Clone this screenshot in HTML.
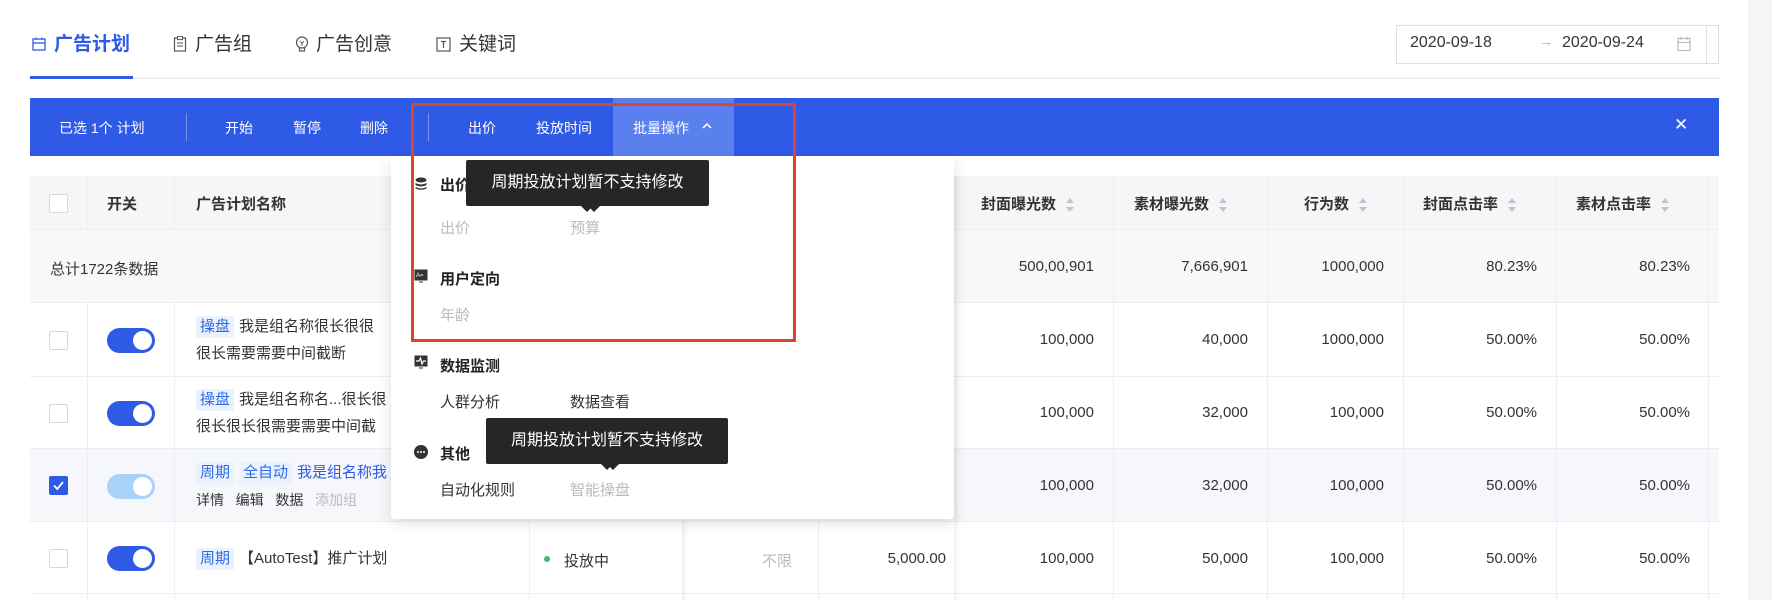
<!DOCTYPE html>
<html><head><meta charset="utf-8"><style>
*{margin:0;padding:0;box-sizing:border-box}
body{width:1772px;height:600px;overflow:hidden;background:#fff;font-family:"Liberation Sans","Noto Sans CJK SC",sans-serif;color:#333;position:relative;font-size:15px}
.a{position:absolute;white-space:nowrap}
.tab{font-size:19px;color:#333;top:32px;line-height:26px}
.hd{background:#f5f6f8}
.cell{position:absolute;top:0;bottom:0;border-right:1px solid #eceef2}
.r{text-align:right}
.num{position:absolute;font-size:15px;color:#333}
.cb{position:absolute;width:19px;height:19px;border:1px solid #d5d8de;background:#fff;border-radius:2px}
.tg{position:absolute;width:48px;height:25px;border-radius:13px;background:#2f5ae6}
.tg::after{content:"";position:absolute;right:3px;top:3px;width:19px;height:19px;border-radius:50%;background:#fff}
.tag{display:inline-block;background:#e9f2fe;color:#2f6ae6;padding:0 4px;border-radius:2px;margin-right:5px;line-height:22px}
.sort{display:inline-block;width:8px;height:14px;position:relative;margin-left:10px;vertical-align:middle}
.sort::before{content:"";position:absolute;left:0;top:0;border:4px solid transparent;border-bottom:5px solid #c0c4cc;border-top:0}
.sort::after{content:"";position:absolute;left:0;bottom:0;border:4px solid transparent;border-top:5px solid #c0c4cc;border-bottom:0}
.tip{position:absolute;background:#252627;color:#fff;font-size:16px;text-align:center;line-height:46px;border-radius:2px}
.tip::after{content:"";position:absolute;bottom:-6px;border:6px solid transparent;border-top:6px solid #252627;border-bottom:0}
.sh{font-weight:bold;font-size:15px;color:#222}
</style></head><body>
<div class="a" style="left:1748px;top:0;width:24px;height:600px;background:#f4f5f7"></div>

<!-- tabs -->
<svg class="a" style="left:32px;top:37px" width="14" height="14" viewBox="0 0 14 14"><rect x="1" y="2" width="12" height="11" fill="none" stroke="#2f5ae6" stroke-width="1.3"/><line x1="1" y1="6" x2="13" y2="6" stroke="#2f5ae6" stroke-width="1.3"/><line x1="4" y1="0.5" x2="4" y2="3" stroke="#2f5ae6"/><line x1="10" y1="0.5" x2="10" y2="3" stroke="#2f5ae6"/></svg>
<div class="a tab" style="left:54px;color:#2f5ae6;font-weight:bold">广告计划</div>
<svg class="a" style="left:173px;top:36px" width="14" height="16" viewBox="0 0 14 16"><rect x="1.5" y="2" width="11" height="13" fill="none" stroke="#555" stroke-width="1.2"/><rect x="4.5" y="0.6" width="5" height="3" fill="#fff" stroke="#555"/><line x1="4" y1="7" x2="10" y2="7" stroke="#555"/><line x1="4" y1="10" x2="10" y2="10" stroke="#555"/></svg>
<div class="a tab" style="left:195px">广告组</div>
<svg class="a" style="left:295px;top:36px" width="14" height="17" viewBox="0 0 14 17"><circle cx="7" cy="6.5" r="5.5" fill="none" stroke="#555" stroke-width="1.2"/><path d="M5 5 L7 7.5 L9 5 M7 7.5 V10" fill="none" stroke="#555"/><path d="M4.5 12 V15 H9.5 V12" fill="none" stroke="#555" stroke-width="1.2"/></svg>
<div class="a tab" style="left:316px">广告创意</div>
<svg class="a" style="left:436px;top:37px" width="15" height="15" viewBox="0 0 15 15"><rect x="1" y="1" width="13" height="13" fill="none" stroke="#555" stroke-width="1.2"/><path d="M5 4.5 H10 M7.5 4.5 V11" stroke="#555" stroke-width="1.2"/></svg>
<div class="a tab" style="left:459px">关键词</div>
<div class="a" style="left:30px;top:77px;width:1690px;height:2px;background:#eef0f3"></div>
<div class="a" style="left:30px;top:76px;width:103px;height:3px;background:#2f5ae6"></div>

<!-- date picker -->
<div class="a" style="left:1396px;top:25px;width:323px;height:39px;border:1px solid #dcdfe6;background:#fff"></div>
<div class="a" style="left:1706px;top:26px;width:1px;height:37px;background:#dcdfe6"></div>
<div class="a" style="left:1410px;top:34px;font-size:16px;color:#333">2020-09-18</div>
<div class="a" style="left:1539px;top:33px;font-size:14px;color:#aaa">→</div>
<div class="a" style="left:1562px;top:34px;font-size:16px;color:#333">2020-09-24</div>
<svg class="a" style="left:1677px;top:36px" width="14" height="16" viewBox="0 0 14 16"><rect x="1" y="2.5" width="12" height="12" fill="none" stroke="#bbb" stroke-width="1.2"/><line x1="1" y1="6.5" x2="13" y2="6.5" stroke="#bbb"/><line x1="4" y1="0.5" x2="4" y2="4" stroke="#bbb"/><line x1="10" y1="0.5" x2="10" y2="4" stroke="#bbb"/></svg>

<!-- table -->
<div class="a hd" style="left:30px;top:176px;width:1689px;height:54px;border-bottom:1px solid #eceef2"></div>
<div class="a" style="left:30px;top:230px;width:1689px;height:73px;background:#f7f8fa;border-bottom:1px solid #eceef2"></div>
<div class="a" style="left:30px;top:303px;width:1689px;height:74px;border-bottom:1px solid #eceef2"></div>
<div class="a" style="left:30px;top:377px;width:1689px;height:72px;border-bottom:1px solid #eceef2"></div>
<div class="a" style="left:30px;top:449px;width:1689px;height:73px;background:#f5f7fa;border-bottom:1px solid #eceef2"></div>
<div class="a" style="left:30px;top:522px;width:1689px;height:72px;border-bottom:1px solid #eceef2"></div>
<!-- column lines -->
<div class="a" style="left:87px;top:176px;width:1px;height:54px;background:#eceef2"></div>
<div class="a" style="left:174px;top:176px;width:1px;height:54px;background:#eceef2"></div>
<div class="a" style="left:87px;top:303px;width:1px;height:297px;background:#eceef2"></div>
<div class="a" style="left:174px;top:303px;width:1px;height:297px;background:#eceef2"></div>
<div class="a" style="left:529px;top:303px;width:1px;height:297px;background:#eceef2"></div>
<div class="a" style="left:682px;top:176px;width:6px;height:424px;background:linear-gradient(90deg,rgba(0,0,0,.06),rgba(0,0,0,0))"></div>
<div class="a" style="left:818px;top:303px;width:1px;height:297px;background:#eceef2"></div>
<div class="a" style="left:954px;top:176px;width:6px;height:424px;background:linear-gradient(90deg,rgba(0,0,0,.05),rgba(0,0,0,0))"></div>
<div class="a" style="left:1113px;top:176px;width:1px;height:424px;background:#eceef2"></div>
<div class="a" style="left:1267px;top:176px;width:1px;height:424px;background:#eceef2"></div>
<div class="a" style="left:1403px;top:176px;width:1px;height:424px;background:#eceef2"></div>
<div class="a" style="left:1556px;top:176px;width:1px;height:424px;background:#eceef2"></div>
<div class="a" style="left:1708px;top:176px;width:1px;height:424px;background:#eceef2"></div>

<div class="cb" style="left:49px;top:194px"></div>
<div class="a" style="left:107px;top:193px;font-weight:bold">开关</div>
<div class="a" style="left:196px;top:193px;font-weight:bold">广告计划名称</div>
<div class="a" style="left:981px;top:193px;font-weight:bold">封面曝光数<span class="sort"></span></div>
<div class="a" style="left:1134px;top:193px;font-weight:bold">素材曝光数<span class="sort"></span></div>
<div class="a" style="left:1304px;top:193px;font-weight:bold">行为数<span class="sort"></span></div>
<div class="a" style="left:1423px;top:193px;font-weight:bold">封面点击率<span class="sort"></span></div>
<div class="a" style="left:1576px;top:193px;font-weight:bold">素材点击率<span class="sort"></span></div>
<div class="a" style="left:50px;top:258px">总计1722条数据</div>

<!-- numeric cols: right-aligned -->
<div class="a r" style="left:960px;width:134px;top:258px">500,00,901</div>
<div class="a r" style="left:1113px;width:135px;top:258px">7,666,901</div>
<div class="a r" style="left:1267px;width:117px;top:258px">1000,000</div>
<div class="a r" style="left:1403px;width:134px;top:258px">80.23%</div>
<div class="a r" style="left:1556px;width:134px;top:258px">80.23%</div>

<div class="a r" style="left:960px;width:134px;top:331px">100,000</div>
<div class="a r" style="left:1113px;width:135px;top:331px">40,000</div>
<div class="a r" style="left:1267px;width:117px;top:331px">1000,000</div>
<div class="a r" style="left:1403px;width:134px;top:331px">50.00%</div>
<div class="a r" style="left:1556px;width:134px;top:331px">50.00%</div>

<div class="a r" style="left:960px;width:134px;top:404px">100,000</div>
<div class="a r" style="left:1113px;width:135px;top:404px">32,000</div>
<div class="a r" style="left:1267px;width:117px;top:404px">100,000</div>
<div class="a r" style="left:1403px;width:134px;top:404px">50.00%</div>
<div class="a r" style="left:1556px;width:134px;top:404px">50.00%</div>

<div class="a r" style="left:960px;width:134px;top:477px">100,000</div>
<div class="a r" style="left:1113px;width:135px;top:477px">32,000</div>
<div class="a r" style="left:1267px;width:117px;top:477px">100,000</div>
<div class="a r" style="left:1403px;width:134px;top:477px">50.00%</div>
<div class="a r" style="left:1556px;width:134px;top:477px">50.00%</div>

<div class="a r" style="left:960px;width:134px;top:550px">100,000</div>
<div class="a r" style="left:1113px;width:135px;top:550px">50,000</div>
<div class="a r" style="left:1267px;width:117px;top:550px">100,000</div>
<div class="a r" style="left:1403px;width:134px;top:550px">50.00%</div>
<div class="a r" style="left:1556px;width:134px;top:550px">50.00%</div>
<div class="a r" style="left:818px;width:128px;top:550px">5,000.00</div>
<div class="a" style="left:762px;top:550px;color:#bbb">不限</div>
<div class="a" style="left:544px;top:556px;width:6px;height:6px;border-radius:50%;background:#3cb96b"></div>
<div class="a" style="left:564px;top:550px">投放中</div>

<!-- rows left -->
<div class="cb" style="left:49px;top:331px"></div><div class="tg" style="left:107px;top:328px"></div>
<div class="a" style="left:196px;top:316px;line-height:22px"><span class="tag">操盘</span>我是组名称很长很很</div>
<div class="a" style="left:196px;top:343px;line-height:22px">很长需要需要中间截断</div>
<div class="cb" style="left:49px;top:404px"></div><div class="tg" style="left:107px;top:401px"></div>
<div class="a" style="left:196px;top:389px;line-height:22px"><span class="tag">操盘</span>我是组名称名...很长很</div>
<div class="a" style="left:196px;top:416px;line-height:22px">很长很长很需要需要中间截</div>
<div class="a" style="left:49px;top:476px;width:19px;height:19px;background:#2f5ae6;border-radius:2px"><svg width="19" height="19"><path d="M5 9.5 L8.3 13 L14 6" fill="none" stroke="#fff" stroke-width="1.8"/></svg></div>
<div class="tg" style="left:107px;top:474px;background:#a9d2fb"></div>
<div class="a" style="left:196px;top:462px;line-height:22px;color:#2f5ae6"><span class="tag">周期</span><span class="tag">全自动</span>我是组名称我</div>
<div class="a" style="left:196px;top:489px;line-height:22px;font-size:14px">详情 &nbsp; 编辑 &nbsp; 数据 &nbsp; <span style="color:#bbb">添加组</span></div>
<div class="cb" style="left:49px;top:549px"></div><div class="tg" style="left:107px;top:546px"></div>
<div class="a" style="left:196px;top:548px;line-height:22px"><span class="tag">周期</span>【AutoTest】推广计划</div>

<!-- blue bar -->
<div class="a" style="left:30px;top:98px;width:1689px;height:58px;background:#2f5ae6"></div>
<div class="a" style="left:613px;top:98px;width:121px;height:58px;background:#5a80ee"></div>
<div class="a" style="left:186px;top:113px;width:1px;height:28px;background:rgba(255,255,255,.35)"></div>
<div class="a" style="left:428px;top:113px;width:1px;height:28px;background:rgba(255,255,255,.35)"></div>
<div class="a" style="left:59px;top:118px;color:#fff;font-size:14px">已选 1个 计划</div>
<div class="a" style="left:225px;top:118px;color:#fff;font-size:14px">开始</div>
<div class="a" style="left:293px;top:118px;color:#fff;font-size:14px">暂停</div>
<div class="a" style="left:360px;top:118px;color:#fff;font-size:14px">删除</div>
<div class="a" style="left:468px;top:118px;color:#fff;font-size:14px">出价</div>
<div class="a" style="left:536px;top:118px;color:#fff;font-size:14px">投放时间</div>
<div class="a" style="left:633px;top:118px;color:#fff;font-size:14px">批量操作</div>
<svg class="a" style="left:702px;top:122px" width="10" height="8"><path d="M1 6 L5 2 L9 6" fill="none" stroke="#fff" stroke-width="1.5"/></svg>
<div class="a" style="left:1674px;top:115px;color:#fff;font-size:17px">✕</div>

<!-- dropdown -->
<div class="a" style="left:391px;top:156px;width:563px;height:363px;background:#fff;border-radius:0 0 4px 4px;box-shadow:0 4px 14px rgba(0,0,0,.12)"></div>
<svg class="a" style="left:414px;top:177px" width="14" height="14" viewBox="0 0 14 14"><ellipse cx="7" cy="3" rx="5.5" ry="2.5" fill="#333"/><path d="M1.5 6 Q7 9 12.5 6 V8 Q7 11 1.5 8Z M1.5 10 Q7 13 12.5 10 V11.5 Q7 14 1.5 11.5Z" fill="#333"/></svg>
<div class="a sh" style="left:440px;top:174px">出价与预算</div>
<div class="a" style="left:440px;top:217px;color:#bbb">出价</div>
<div class="a" style="left:570px;top:217px;color:#bbb">预算</div>
<svg class="a" style="left:414px;top:269px" width="14" height="15" viewBox="0 0 14 15"><rect x="0.5" y="0.5" width="13" height="11" fill="#333"/><text x="2" y="8" font-size="6" fill="#fff" font-family="Liberation Sans">A=</text><rect x="5" y="12" width="4" height="2" fill="#999"/></svg>
<div class="a sh" style="left:440px;top:268px">用户定向</div>
<div class="a" style="left:440px;top:304px;color:#bbb">年龄</div>
<svg class="a" style="left:414px;top:355px" width="14" height="15" viewBox="0 0 14 15"><rect x="0.5" y="0.5" width="13" height="11" fill="#333"/><path d="M2 6 H5 L6.5 3 L8 9 L9.5 6 H12" fill="none" stroke="#fff" stroke-width="1.2"/><rect x="5" y="12" width="4" height="2" fill="#999"/></svg>
<div class="a sh" style="left:440px;top:355px">数据监测</div>
<div class="a" style="left:440px;top:391px">人群分析</div>
<div class="a" style="left:570px;top:391px">数据查看</div>
<svg class="a" style="left:414px;top:445px" width="14" height="14"><circle cx="7" cy="7" r="7" fill="#333"/><circle cx="4" cy="7" r="1" fill="#fff"/><circle cx="7" cy="7" r="1" fill="#fff"/><circle cx="10" cy="7" r="1" fill="#fff"/></svg>
<div class="a sh" style="left:440px;top:443px">其他</div>
<div class="a" style="left:440px;top:479px">自动化规则</div>
<div class="a" style="left:570px;top:479px;color:#bbb">智能操盘</div>

<div class="tip" style="left:466px;top:160px;width:243px;height:46px"></div>
<div class="a" style="left:466px;top:160px;width:243px;line-height:46px;color:#fff;font-size:16px;text-align:center">周期投放计划暂不支持修改</div>
<div class="a" style="left:581px;top:206px;border:6px solid transparent;border-top:6px solid #252627;border-bottom:0"></div>
<div class="tip" style="left:486px;top:418px;width:242px;height:46px"></div>
<div class="a" style="left:486px;top:418px;width:242px;line-height:46px;color:#fff;font-size:16px;text-align:center">周期投放计划暂不支持修改</div>
<div class="a" style="left:601px;top:464px;border:6px solid transparent;border-top:6px solid #252627;border-bottom:0"></div>

<!-- red box -->
<div class="a" style="left:411px;top:103px;width:385px;height:239px;border:3px solid #dc4431"></div>
</body></html>
